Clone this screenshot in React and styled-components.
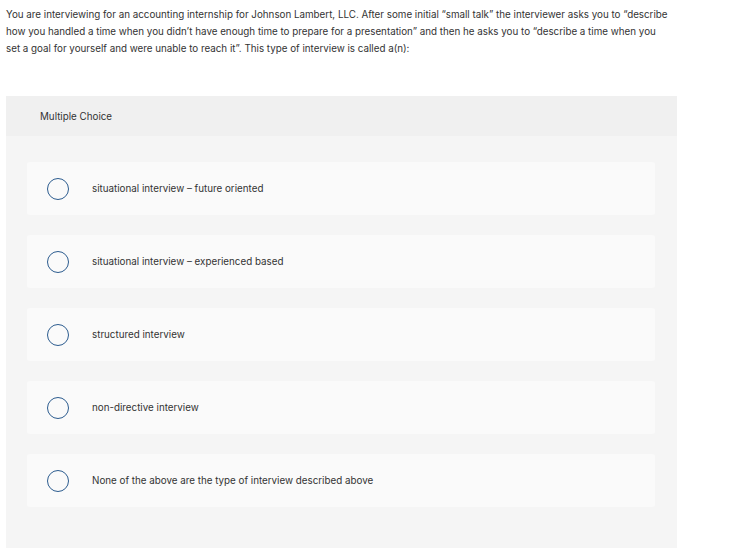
import React from "react";
import styled, { createGlobalStyle } from "styled-components";

const Global = createGlobalStyle`
  html, body { margin: 0; padding: 0; background: #fff; }
  body { font-family: Inter, "Liberation Sans", sans-serif; color: #2f2f2f; }
`;

const Page = styled.div`
  padding: 6px 62px 0 6px;
  width: 739px;
  height: 548px;
  box-sizing: border-box;
  overflow: hidden;
`;

const Question = styled.p`
  margin: 0;
  max-width: 665px;
  font-size: 9.8px;
  line-height: 17px;
  color: #333;
`;

const Panel = styled.div`
  margin-top: 39px;
  background: #f5f5f5;
  height: 460px;
`;

const Header = styled.div`
  background: #f0f0f0;
  height: 40px;
  display: flex;
  align-items: center;
  padding-left: 34px;
  font-size: 9.8px;
  color: #333;
`;

const Options = styled.div`
  display: flex;
  flex-direction: column;
  gap: 20px;
  padding: 26px 22px 0 21px;
`;

const Option = styled.label`
  display: flex;
  align-items: center;
  height: 53px;
  background: #fafafa;
  border-radius: 3px;
  padding-left: 20px;
  font-size: 9.8px;
  color: #333;
  cursor: pointer;
`;

const Radio = styled.span`
  width: 20px;
  height: 20px;
  border: 1.5px solid #2c5c8f;
  border-radius: 50%;
  flex: none;
  margin-right: 23px;
`;

const options = [
  "situational interview – future oriented",
  "situational interview – experienced based",
  "structured interview",
  "non-directive interview",
  "None of the above are the type of interview described above",
];

export default function App() {
  return (
    <>
      <Global />
      <Page>
        <Question>
          You are interviewing for an accounting internship for Johnson Lambert, LLC. After some initial “small talk” the interviewer asks you to “describe how you handled a time when you didn’t have enough time to prepare for a presentation” and then he asks you to “describe a time when you set a goal for yourself and were unable to reach it”. This type of interview is called a(n):
        </Question>
        <Panel>
          <Header>Multiple Choice</Header>
          <Options>
            {options.map((o) => (
              <Option key={o}>
                <Radio />
                {o}
              </Option>
            ))}
          </Options>
        </Panel>
      </Page>
    </>
  );
}
